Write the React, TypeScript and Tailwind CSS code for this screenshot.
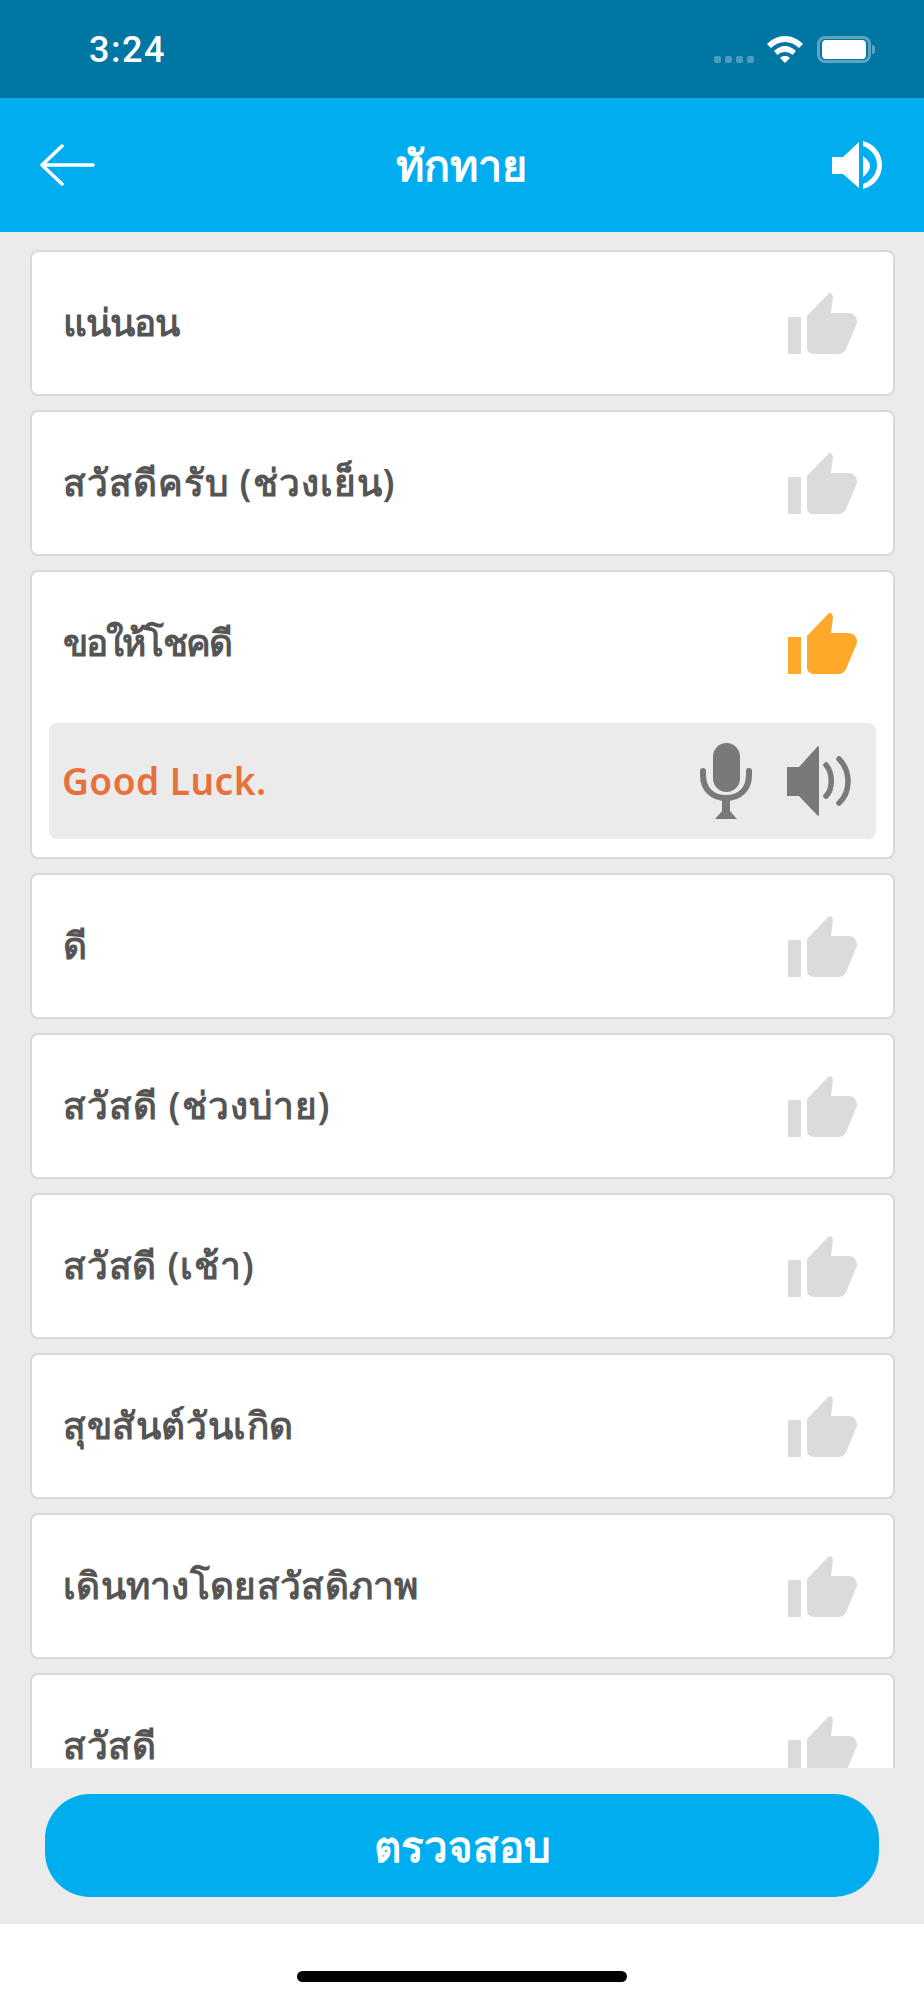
const items = [
  { label: "แน่นอน", tracking: "tracking-[-1px]" },
  { label: "สวัสดีครับ (ช่วงเย็น)", tracking: "tracking-[1px]" },
  { label: "ขอให้โชคดี", tracking: "tracking-[-1.9px]" },
  { label: "ดี", tracking: "tracking-normal" },
  { label: "สวัสดี (ช่วงบ่าย)", tracking: "tracking-[1px]" },
  { label: "สวัสดี (เช้า)", tracking: "tracking-[0.8px]" },
  { label: "สุขสันต์วันเกิด", tracking: "tracking-[0.6px]" },
  { label: "เดินทางโดยสวัสดิภาพ", tracking: "tracking-[0.3px]" },
  { label: "สวัสดี", tracking: "tracking-[0.6px]" },
];

function ThumbIcon({ color }: { color: string }) {
  return (
    <svg width="70" height="63" viewBox="0 0 70 63" fill={color} className="shrink-0">
      <rect x="0" y="25" width="13" height="37" />
      <path d="M19 24 L40 2 Q42 0 44 2 L45 5 L43 21 L60 21 Q69 21 69 31 L58 57 Q56 62 50 62 L26 62 Q19 62 19 55 Z" />
    </svg>
  );
}

function MicIcon() {
  return (
    <svg width="52" height="76" viewBox="0 0 52 76" className="shrink-0">
      <rect x="13" y="0" width="27" height="49" rx="13.5" fill="#797979" />
      <path d="M3 28 L3 32 C3 46 12 55 26 55 C40 55 49 46 49 32 L49 28" fill="none" stroke="#797979" strokeWidth="6" strokeLinecap="round" />
      <path d="M22 56 L30 56 L30 68 L37 76 L15 76 L22 68 Z" fill="#797979" />
    </svg>
  );
}

function SpeakerIcon() {
  return (
    <svg width="65" height="70" viewBox="0 0 65 70" className="shrink-0">
      <path d="M0 21 L12 21 L31 0 Q32 0 32 2 L32 68 Q32 70 31 70 L12 50 L0 50 Z" fill="#797979" />
      <path d="M39 19 C46 27 46 43 39 50" fill="none" stroke="#797979" strokeWidth="5.5" strokeLinecap="round" />
      <path d="M52 13 C64 25 64 46 52 57" fill="none" stroke="#797979" strokeWidth="5.5" strokeLinecap="round" />
    </svg>
  );
}

function Card({ label, tracking, open }: { label: string; tracking: string; open: boolean }) {
  return (
    <div className="shrink-0 rounded-[8px] border-2 border-[#d9d9d9] bg-white">
      <div className="flex h-[142px] items-center justify-between pl-[31px] pr-[35px]">
        <span className={`mb-[2px] text-[37px] font-semibold leading-[44px] text-[#555555] ${tracking}`}>{label}</span>
        <ThumbIcon color={open ? "#ffa92b" : "#dbdbdb"} />
      </div>
      {open ? (
        <div className="mx-[17px] mb-[18px] mt-[9px] flex h-[116px] items-center justify-between rounded-[8px] bg-[#ebebeb] pl-[13px] pr-[24px]">
          <span className="text-[37px] font-semibold tracking-[0.5px] text-[#e8703a]">Good Luck.</span>
          <div className="flex items-center gap-[35px]">
            <MicIcon />
            <SpeakerIcon />
          </div>
        </div>
      ) : null}
    </div>
  );
}

export default function App() {
  return (
    <div className="flex h-[2000px] w-[924px] flex-col overflow-hidden bg-white font-['Noto_Sans','Open_Sans',sans-serif]">
      <div className="flex h-[98px] shrink-0 items-center justify-between bg-[#0076a3] pl-[89px] pr-[49px]">
        <span className="mt-[2px] font-['Roboto',sans-serif] text-[36px] font-medium leading-none tracking-[1.5px] text-white">3:24</span>
        <div className="flex items-center">
          <div className="mt-[20px] flex gap-[4px]">
            <span className="h-[7px] w-[7px] rounded-[2px] bg-[#4d9bbd]" />
            <span className="h-[7px] w-[7px] rounded-[2px] bg-[#4d9bbd]" />
            <span className="h-[7px] w-[7px] rounded-[2px] bg-[#4d9bbd]" />
            <span className="h-[7px] w-[7px] rounded-[2px] bg-[#4d9bbd]" />
          </div>
          <svg width="36" height="27" viewBox="0 0 36 27" fill="white" className="ml-[13px]">
            <path d="M18 0 C25 0 31 3 36 8 L32 12 C28 8 23 6 18 6 C13 6 8 8 4 12 L0 8 C5 3 11 0 18 0 Z" />
            <path d="M18 10 C22 10 26 12 29 15 L25.5 19 C23.5 17 21 16 18 16 C15 16 12.500 17 10.500 19 L7 15 C10 12 14 10 18 10 Z" />
            <path d="M18 20 C20 20 21.500 20.500 23 22 L18 27 L13 22 C14.500 20.500 16 20 18 20 Z" />
          </svg>
          <div className="ml-[14px] flex h-[27px] w-[54px] items-center justify-center rounded-[8px] border-[3px] border-[#5fa5c2]">
            <div className="h-[19px] w-[44px] rounded-[4px] bg-white" />
          </div>
          <div className="ml-[1px] h-[9px] w-[3px] rounded-r-full bg-[#5fa5c2]" />
        </div>
      </div>

      <div className="flex h-[134px] shrink-0 items-center justify-between bg-[#00aeef] pl-[39px] pr-[41px]">
        <svg width="56" height="42" viewBox="0 0 56 42" fill="none" stroke="white" strokeWidth="3.500" strokeLinecap="round" strokeLinejoin="round">
          <path d="M54 21 L3 21 M23 2 L3 21 L23 40" />
        </svg>
        <span className="mr-[4px] text-[43px] font-semibold text-white">ทักทาย</span>
        <svg width="51" height="48" viewBox="0 0 51 48" fill="white">
          <path d="M0 16 L11 16 L27 1 L27 47 L11 33 L0 33 Z" />
          <path d="M31 15 C36 19 38 22 38 25 C38 28 36 32 31 36 Z" />
          <path d="M31 0 C43 3 50 13 50 24 C50 35 43 45 31 48 L31 43 C39 40 45 33 45 24 C45 15 39 8 31 5 Z" />
        </svg>
      </div>

      <div className="flex h-[1536px] shrink-0 flex-col gap-[14px] overflow-hidden bg-[#ebebeb] pl-[30px] pr-[29px] pt-[18px]">
        {items.map((item, i) => (
          <Card key={item.label} label={item.label} tracking={item.tracking} open={i === 2} />
        ))}
      </div>

      <div className="flex h-[156px] shrink-0 items-start bg-[#ebebeb] px-[45px] pt-[26px]">
        <button type="button" className="flex h-[103px] w-full items-center justify-center rounded-[45px] bg-[#00aeef] text-[42px] font-semibold text-white">
          ตรวจสอบ
        </button>
      </div>

      <div className="flex flex-1 justify-center pt-[47px]">
        <div className="h-[11px] w-[330px] rounded-full bg-black" />
      </div>
    </div>
  );
}
